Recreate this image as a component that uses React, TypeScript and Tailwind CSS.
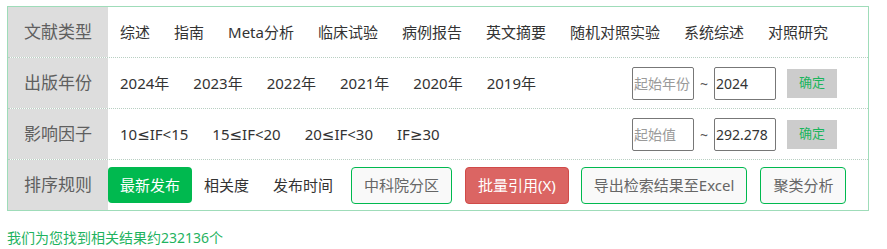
import React from "react";

const FONT = { fontFamily: '"Noto Sans", "DejaVu Sans", "Noto Sans CJK SC", sans-serif' };

const types = ["综述", "指南", "Meta分析", "临床试验", "病例报告", "英文摘要", "随机对照实验", "系统综述", "对照研究"];
const years = ["2024年", "2023年", "2022年", "2021年", "2020年", "2019年"];
const ifs = ["10≤IF<15", "15≤IF<20", "20≤IF<30", "IF≥30"];

function Label({ text }: { text: string }) {
    return (
        <div className="w-[100px] shrink-0 bg-[#dddddd] flex items-center justify-center text-[17px] text-[#5f5f5f]">
            {text}
        </div>
    );
}

function Item({ text }: { text: string }) {
    return <span className="px-3 text-[15px] text-[#333] whitespace-nowrap cursor-pointer">{text}</span>;
}

function Range({ placeholder, value }: { placeholder: string; value: string }) {
    return (
        <div className="ml-auto mr-[31px] flex items-center">
            <input
                placeholder={placeholder}
                className="w-[62px] h-[33px] border border-[#777] rounded-[2px] px-[1px] text-[14px] text-[#333] placeholder:text-[#9a9a9a] outline-none"
            />
            <span className="px-[6px] text-[14px] text-[#555]">~</span>
            <input
                defaultValue={value}
                className="w-[62px] h-[33px] border border-[#777] rounded-[2px] px-[1px] text-[14px] text-[#333] outline-none"
            />
            <button className="ml-[11px] w-[50px] h-[29px] bg-[#cccccc] text-[13px] text-[#1ab55c]">确定</button>
        </div>
    );
}

export default function App() {
    return (
        <div className="bg-white w-[887px] h-[249px] pt-[6px] pl-[7px]" style={FONT}>
            <div className="w-[862px] border border-[#9fdcb9]">
                <div className="flex h-[51px] border-b border-dotted border-[#b8cfc2]">
                    <Label text="文献类型" />
                    <div className="flex items-center">
                        {types.map((t) => (
                            <Item key={t} text={t} />
                        ))}
                    </div>
                </div>
                <div className="flex h-[51px] border-b border-dotted border-[#b8cfc2]">
                    <Label text="出版年份" />
                    <div className="flex flex-1 items-center">
                        {years.map((t) => (
                            <Item key={t} text={t} />
                        ))}
                        <Range placeholder="起始年份" value="2024" />
                    </div>
                </div>
                <div className="flex h-[51px] border-b border-dotted border-[#b8cfc2]">
                    <Label text="影响因子" />
                    <div className="flex flex-1 items-center">
                        {ifs.map((t) => (
                            <Item key={t} text={t} />
                        ))}
                        <Range placeholder="起始值" value="292.278" />
                    </div>
                </div>
                <div className="flex h-[50px]">
                    <Label text="排序规则" />
                    <div className="flex flex-1 items-center">
                        <button className="h-[36px] px-3 rounded-[4px] bg-[#00b94f] text-white text-[15px]">最新发布</button>
                        <Item text="相关度" />
                        <Item text="发布时间" />
                        <button className="ml-[6px] h-[37px] px-3 rounded-[4px] border border-[#00b94f] bg-[#f9f9f9] text-[#666] text-[15px]">
                            中科院分区
                        </button>
                        <button className="ml-[13px] h-[37px] px-3 rounded-[4px] border border-[#d04a48] bg-[#db6563] text-white text-[15px]">
                            批量引用(X)
                        </button>
                        <button className="ml-[12px] h-[37px] px-3 rounded-[4px] border border-[#00b94f] bg-[#f9f9f9] text-[#666] text-[15px]">
                            导出检索结果至Excel
                        </button>
                        <button className="ml-[13px] h-[37px] px-3 rounded-[4px] border border-[#00b94f] bg-[#f9f9f9] text-[#666] text-[15px]">
                            聚类分析
                        </button>
                    </div>
                </div>
            </div>
            <div className="mt-[16px] text-[14px] text-[#1fb35f]">我们为您找到相关结果约232136个</div>
        </div>
    );
}
